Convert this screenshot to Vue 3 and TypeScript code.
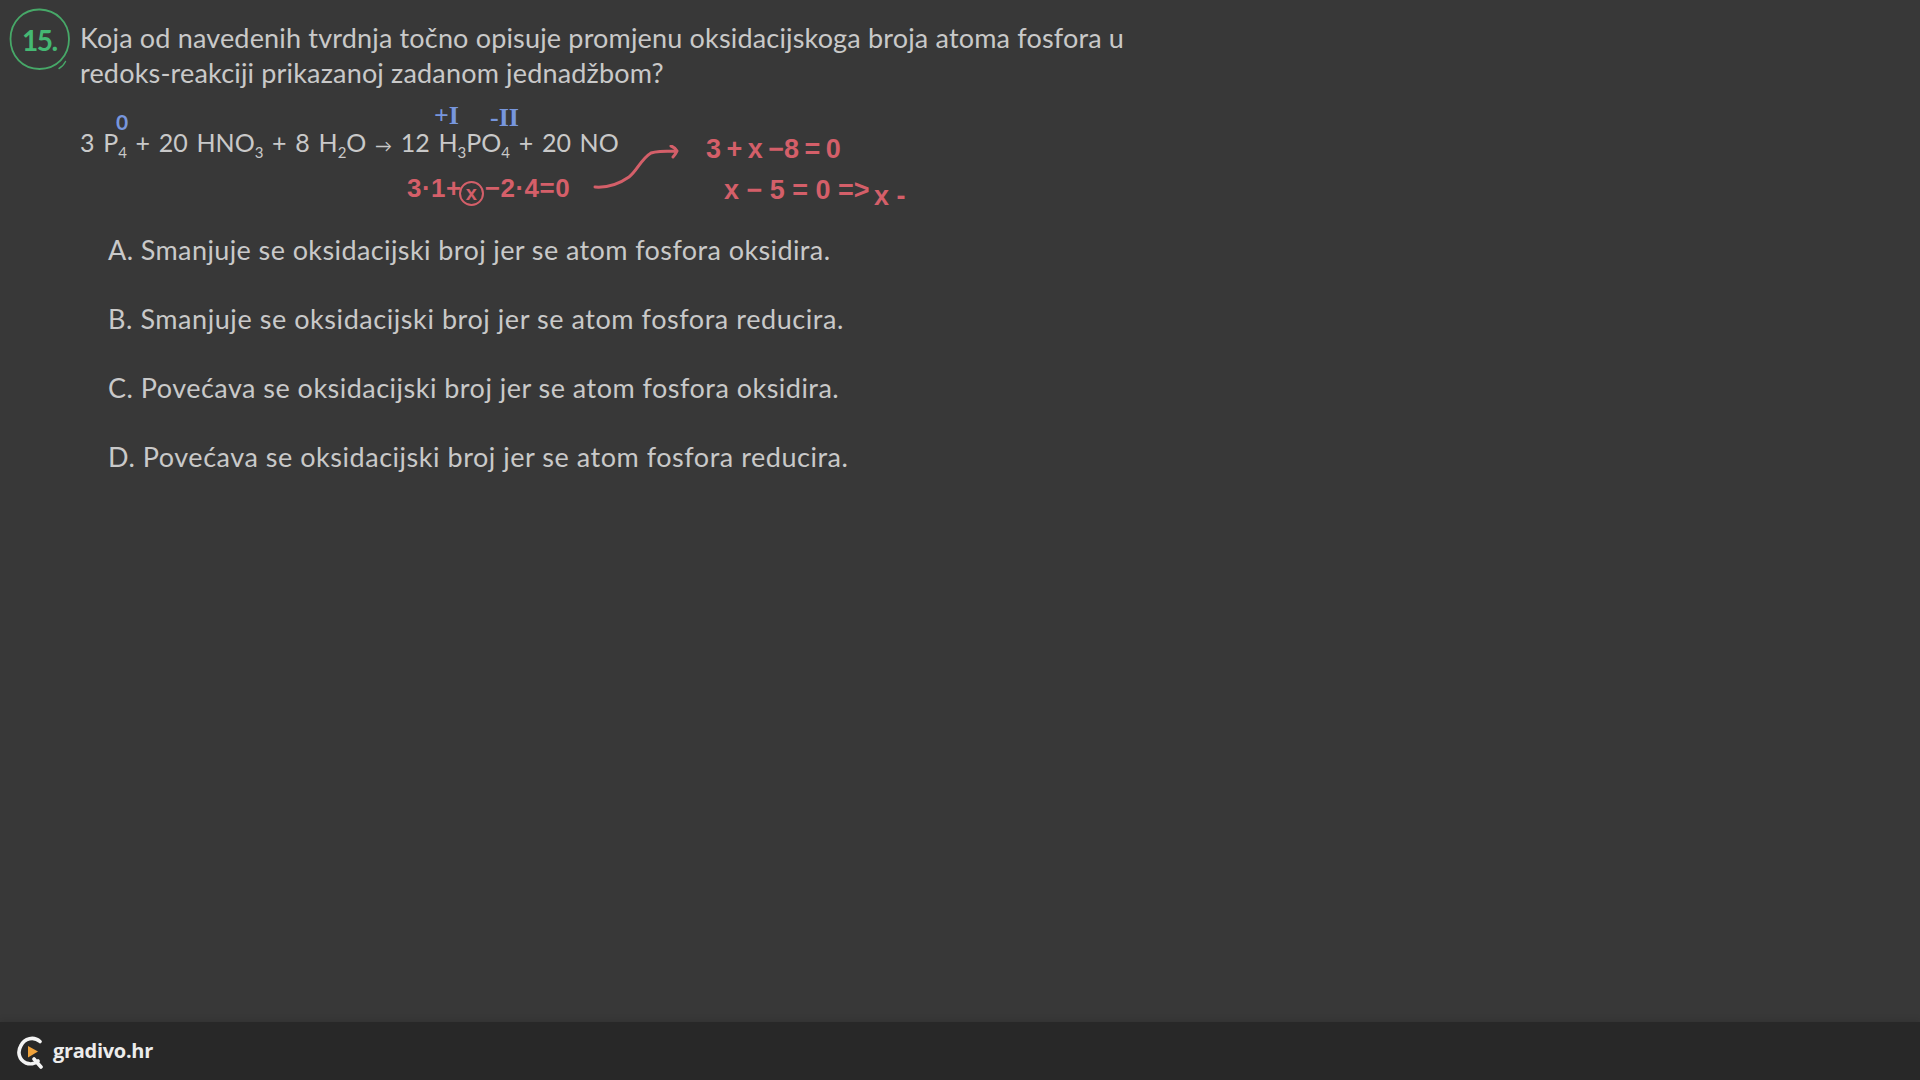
<script setup lang="ts">
const options: string[] = [
  'A. Smanjuje se oksidacijski broj jer se atom fosfora oksidira.',
  'B. Smanjuje se oksidacijski broj jer se atom fosfora reducira.',
  'C. Povećava se oksidacijski broj jer se atom fosfora oksidira.',
  'D. Povećava se oksidacijski broj jer se atom fosfora reducira.',
]
</script>

<template>
  <div class="page">
    <main class="board">
      <svg class="ring" viewBox="0 0 62 64" width="62" height="64" aria-hidden="true">
        <path d="M31 1.500C15 1 1.500 13 1.500 31c0 17 12 30 29 30 17 0 29.500-13 29.500-30C60 14 47 2 31 1.500Z" fill="none" stroke="#47a868" stroke-width="1.800" />
        <path d="M50 60.500c3-1.500 5-4 6.500-7" fill="none" stroke="#47a868" stroke-width="1.400" stroke-linecap="round" />
      </svg>
      <span class="badge-text">15.</span>

      <p class="question">Koja od navedenih tvrdnja točno opisuje promjenu oksidacijskoga broja atoma fosfora u redoks-reakciji prikazanoj zadanom jednadžbom?</p>

      <div class="equation-wrap">
        <p class="equation">3 P<sub>4</sub> + 20 HNO<sub>3</sub> + 8 H<sub>2</sub>O <span class="yields">→</span> 12 H<sub>3</sub>PO<sub>4</sub> + 20 NO</p>
        <span class="ink blue ox-zero">0</span>
        <span class="ink blue ox-one">+I</span>
        <span class="ink blue ox-two">-II</span>

        <span class="ink red calc-a">3·1+<i class="circled">x</i>−2·4=0</span>
        <svg class="arrow" viewBox="0 0 90 50" width="90" height="50" aria-hidden="true">
          <path d="M2 42c14 1 24-3 34-10 8-6 12-18 22-24 6-2 14-2 24-2M78 1c3 1 5 3 6 5-1 2-2 4-4 6" fill="none" stroke="#d45f69" stroke-width="3" stroke-linecap="round" stroke-linejoin="round" />
        </svg>
        <span class="ink red calc-b">3 + x −8 = 0</span>
        <span class="ink red calc-c">x − 5 = 0 =&gt;</span>
        <span class="ink red calc-d">x -</span>
      </div>

      <ol class="options">
        <li v-for="option in options" :key="option">{{ option }}</li>
      </ol>
    </main>

    <footer class="bar">
      <svg class="logo" viewBox="0 0 30 34" width="30" height="34" aria-hidden="true">
        <path d="M24 6.500A12 12 0 0 0 5 10.500C1 17 3 25 10 28c4 1.500 9 .8 12-2M18 24l7 8" fill="none" stroke="#f4f4f4" stroke-width="3.600" stroke-linecap="round" />
        <path d="M12 11l10 5.500-10 6z" fill="#f0a33c" />
      </svg>
      <span class="brand">gradivo.hr</span>
    </footer>
  </div>
</template>

<style scoped>
.page {
  display: flex;
  flex-direction: column;
  height: 1080px;
  background: #383838;
  overflow: hidden;
  font-family: "Lato", "Open Sans", sans-serif;
  color: #c9c9c9;
}
.board {
  flex: 1;
  position: relative;
  padding: 20px 0 0 80px;
}
.ring {
  position: absolute;
  left: 9px;
  top: 8px;
}
.badge-text {
  position: absolute;
  left: 22px;
  top: 22px;
  font-family: "Lato", sans-serif;
  font-weight: 700;
  font-size: 28px;
  line-height: 36px;
  letter-spacing: -1.500px;
  color: #45b873;
}
.question {
  margin: 0;
  width: 1060px;
  font-size: 27px;
  line-height: 35px;
  letter-spacing: 0.17px;
}
.equation-wrap {
  position: relative;
  height: 114px;
  margin-top: 28px;
}
.equation {
  margin: 0;
  padding-top: 7px;
  font-size: 25px;
  line-height: 34px;
  word-spacing: 2.300px;
  white-space: nowrap;
}
.equation sub {
  font-size: 15px;
  line-height: 0;
}
.yields {
  font-size: 17px;
}
.ink {
  position: absolute;
  white-space: nowrap;
  font-family: "Liberation Sans", sans-serif;
  font-weight: 700;
}
.blue {
  color: #7796dd;
}
.red {
  color: #d45f69;
  font-size: 27px;
  line-height: 32px;
}
.ox-zero {
  left: 36px;
  top: -5px;
  font-family: "Lato", sans-serif;
  font-size: 21px;
  line-height: 18px;
}
.ox-one {
  left: 354px;
  top: -11px;
  font-family: "Liberation Serif", serif;
  font-size: 26px;
  line-height: 18px;
}
.ox-two {
  left: 410px;
  top: -9px;
  font-family: "Liberation Serif", serif;
  font-size: 26px;
  line-height: 18px;
}
.calc-a {
  left: 327px;
  top: 54px;
  font-size: 26px;
  letter-spacing: 0.5px;
}
.circled {
  display: inline-block;
  width: 25px;
  height: 25px;
  margin: 0 1px 0 -3px;
  border: 2.500px solid #d45f69;
  border-radius: 50%;
  font-style: normal;
  font-size: 20px;
  line-height: 20px;
  text-align: center;
  vertical-align: -3px;
  box-sizing: border-box;
  letter-spacing: 0;
}
.arrow {
  position: absolute;
  left: 513px;
  top: 27px;
}
.calc-b {
  left: 626px;
  top: 15px;
  word-spacing: -2px;
}
.calc-c {
  left: 644px;
  top: 56px;
}
.calc-d {
  left: 794px;
  top: 62px;
}
.options {
  list-style: none;
  margin: 0;
  padding: 0 0 0 28px;
  display: flex;
  flex-direction: column;
  gap: 34px;
  font-size: 27px;
  line-height: 35px;
}
.options li:nth-child(1) { letter-spacing: 0.4px; }
.options li:nth-child(2) { letter-spacing: 0.56px; }
.options li:nth-child(3) { letter-spacing: 0.48px; }
.options li:nth-child(4) { letter-spacing: 0.53px; }
.bar {
  height: 58px;
  flex: none;
  display: flex;
  align-items: center;
  gap: 7px;
  padding-left: 16px;
  background: #282828;
  box-shadow: 0 -3px 6px rgba(0, 0, 0, 0.08);
}
.logo {
  flex: none;
  margin-top: 2px;
}
.brand {
  font-family: "Open Sans", sans-serif;
  font-weight: 700;
  font-size: 20px;
  letter-spacing: -0.3px;
  color: #ececec;
  margin-top: -1px;
}
</style>
